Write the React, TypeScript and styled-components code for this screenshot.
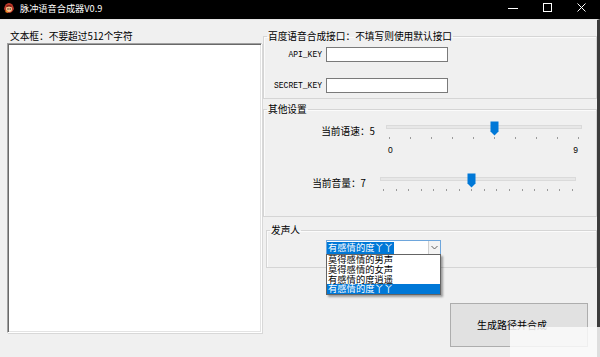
import { styled, createGlobalStyle } from "styled-components";

const GlobalStyle = createGlobalStyle`
  html, body {
    margin: 0;
    padding: 0;
    background: #f0f0f0;
  }
  * {
    box-sizing: border-box;
  }
`;

const voices = ["莫得感情的男声", "莫得感情的女声", "有感情的度逍遥", "有感情的度丫丫"];

const TitleIcon = () => (
  <svg width="12" height="12" viewBox="0 0 12 12">
    <path d="M1 7 Q2 1 6 1 Q10 1 11 7 Q9 11 6 11 Q3 11 1 7 Z" fill="#c0392b" />
    <circle cx="6" cy="7" r="3" fill="#f5c28a" />
    <path d="M3 4 Q6 2 9 4 L8 5 Q6 4 4 5 Z" fill="#7a1b12" />
    <circle cx="5" cy="7" r="0.7" fill="#222" />
    <circle cx="7.2" cy="7" r="0.7" fill="#222" />
    <path d="M2 10 L4 8 L5 11 Z" fill="#f08c1a" />
  </svg>
);

type SliderProps = {
  ticks: number;
  value: number;
  showScale?: boolean;
};

const Slider = ({ ticks, value, showScale }: SliderProps) => {
  const left = 3 + (value / (ticks - 1)) * 190 - 4.5;
  return (
    <SliderBox>
      <TrackArea>
        <Track />
        <Thumb style={{ left }}>
          <svg width="9" height="15" viewBox="0 0 9 15">
            <path d="M0.5 0.5 H8.5 V10.5 L4.5 14.5 L0.5 10.5 Z" fill="#0078d7" />
          </svg>
        </Thumb>
      </TrackArea>
      <Ticks>
        {Array.from({ length: ticks }).map((_, i) => (
          <Tick key={i} />
        ))}
      </Ticks>
      {showScale && (
        <Scale>
          <span>0</span>
          <span>{ticks - 1}</span>
        </Scale>
      )}
    </SliderBox>
  );
};

const App = () => {
  return (
    <>
      <GlobalStyle />
      <Window>
        <TitleBar>
          <IconSlot>
            <TitleIcon />
          </IconSlot>
          <Title>脉冲语音合成器V0.9</Title>
          <Controls>
            <CtrlButton>
              <svg width="10" height="10" viewBox="0 0 10 10">
                <path d="M0 5.5 H10" stroke="#fff" strokeWidth="1" />
              </svg>
            </CtrlButton>
            <CtrlButton>
              <svg width="9" height="9" viewBox="0 0 9 9">
                <rect x="0.5" y="0.5" width="8" height="8" fill="none" stroke="#fff" strokeWidth="1" />
              </svg>
            </CtrlButton>
            <CtrlButton>
              <svg width="9" height="9" viewBox="0 0 9 9">
                <path d="M0.5 0.5 L8.5 8.5 M8.5 0.5 L0.5 8.5" stroke="#fff" strokeWidth="1" />
              </svg>
            </CtrlButton>
          </Controls>
        </TitleBar>
        <Main>
          <LeftColumn>
            <Caption>文本框：不要超过512个字符</Caption>
            <TextBox />
          </LeftColumn>
          <RightColumn>
            <Group $top={10} $height={69}>
              <Legend>百度语音合成接口：不填写则使用默认接口</Legend>
              <KeyGrid>
                <KeyLabel>API_KEY</KeyLabel>
                <KeyInput />
                <KeyLabel>SECRET_KEY</KeyLabel>
                <KeyInput />
              </KeyGrid>
            </Group>
            <Group $top={4} $height={114}>
              <Legend>其他设置</Legend>
              <SliderRow $top={6} $labelWidth={111} $gap={11}>
                <SliderLabel>当前语速：5</SliderLabel>
                <Slider ticks={10} value={5} showScale />
              </SliderRow>
              <SliderRow $top={18} $labelWidth={102} $gap={14}>
                <SliderLabel>当前音量：7</SliderLabel>
                <Slider ticks={16} value={7} />
              </SliderRow>
            </Group>
            <Group $top={7} $height={44} $left={3}>
              <Legend>发声人</Legend>
              <Combo>
                <ComboValue>
                  <Selected>有感情的度丫丫</Selected>
                </ComboValue>
                <ComboArrow>
                  <svg width="7" height="5" viewBox="0 0 7 5">
                    <path d="M0.5 1 L3.5 4 L6.5 1" fill="none" stroke="#606060" strokeWidth="1" />
                  </svg>
                </ComboArrow>
                <DropList>
                  {voices.map((v, i) => (
                    <DropItem key={v} $active={i === voices.length - 1}>
                      {v}
                    </DropItem>
                  ))}
                </DropList>
              </Combo>
            </Group>
            <GenerateButton>生成路径并合成</GenerateButton>
          </RightColumn>
        </Main>
        <Watermark />
      </Window>
    </>
  );
};

const Window = styled.div`
  position: relative;
  width: 600px;
  height: 357px;
  background: #f0f0f0;
  display: flex;
  flex-direction: column;
  overflow: hidden;
  font-family: "Noto Sans CJK SC", "Noto Sans", sans-serif;
  color: #000;
`;

const TitleBar = styled.div`
  height: 19px;
  padding-bottom: 4px;
  background: #000;
  display: flex;
  align-items: center;
`;

const IconSlot = styled.div`
  width: 12px;
  height: 12px;
  margin-left: 3px;
  display: flex;
`;

const Title = styled.div`
  margin-left: 5px;
  color: #fff;
  font-size: 9.2px;
  line-height: 12px;
`;

const Controls = styled.div`
  margin-left: auto;
  margin-right: 2px;
  display: flex;
`;

const CtrlButton = styled.div`
  width: 34px;
  height: 15px;
  display: flex;
  align-items: center;
  justify-content: center;
`;

const Main = styled.div`
  flex: 1;
  display: flex;
  border-right: 3px solid #3c3c3c;
  border-top: 1px solid #e4e4e4;
`;

const LeftColumn = styled.div`
  width: 255px;
  margin-left: 7px;
  display: flex;
  flex-direction: column;
`;

const Caption = styled.div`
  margin-top: 10px;
  margin-left: 3px;
  font-size: 9.7px;
  line-height: 12px;
  white-space: nowrap;
`;

const TextBox = styled.div`
  margin-top: 1px;
  height: 290px;
  background: #fff;
  border-top: 1px solid #a0a0a0;
  border-left: 1px solid #a0a0a0;
  border-right: 1px solid #fff;
  border-bottom: 1px solid #fff;
  box-shadow: inset 1px 1px 0 #696969, inset -1px -1px 0 #e3e3e3, 1px 1px 0 #d8d8d8;
`;

const RightColumn = styled.div`
  margin-left: 1px;
  flex: 1;
  display: flex;
  flex-direction: column;
`;

const Group = styled.fieldset<{ $top: number; $height: number; $left?: number }>`
  margin: ${(p) => p.$top}px 0 0 ${(p) => p.$left ?? 0}px;
  padding: 0;
  height: ${(p) => p.$height}px;
  border: 1px solid #d5d5d5;
  box-shadow: inset 1px 1px 0 #fbfbfb;
  min-width: 0;
`;

const Legend = styled.legend`
  margin-left: 3px;
  padding: 0 1px;
  font-size: 9.7px;
  line-height: 12px;
  white-space: nowrap;
`;

const KeyGrid = styled.div`
  margin-top: 5px;
  display: grid;
  grid-template-columns: 58px 122px;
  column-gap: 4px;
  row-gap: 16px;
  align-items: center;
`;

const KeyLabel = styled.div`
  text-align: right;
  font-family: "Liberation Mono", "DejaVu Sans Mono", monospace;
  font-size: 8px;
  line-height: 10px;
  transform: scaleY(1.1);
`;

const KeyInput = styled.div`
  height: 15px;
  background: #fff;
  border: 1px solid #7a7a7a;
`;

const SliderRow = styled.div<{ $top: number; $labelWidth: number; $gap: number }>`
  margin-top: ${(p) => p.$top}px;
  display: flex;
  align-items: flex-start;
  gap: ${(p) => p.$gap}px;
  & > :first-child {
    width: ${(p) => p.$labelWidth}px;
  }
`;

const SliderLabel = styled.div`
  margin-top: 4px;
  text-align: right;
  font-size: 9.7px;
  line-height: 12px;
  white-space: nowrap;
`;

const SliderBox = styled.div`
  width: 196px;
  display: flex;
  flex-direction: column;
`;

const TrackArea = styled.div`
  position: relative;
  height: 16px;
`;

const Track = styled.div`
  margin-top: 4px;
  height: 4px;
  background: #e7e7e7;
  border: 1px solid #dadada;
`;

const Thumb = styled.div`
  position: absolute;
  top: 0;
  width: 9px;
  height: 15px;
  display: flex;
`;

const Ticks = styled.div`
  height: 3px;
  padding: 0 3px;
  display: flex;
  justify-content: space-between;
`;

const Tick = styled.div`
  width: 1px;
  height: 2px;
  background: #9a9a9a;
`;

const Scale = styled.div`
  margin-top: 5px;
  padding: 0 4px 0 2px;
  display: flex;
  justify-content: space-between;
  font-family: "Liberation Sans", Arial, sans-serif;
  font-size: 8.5px;
  line-height: 10px;
`;

const Combo = styled.div`
  position: relative;
  margin: 4px 0 0 59px;
  width: 115px;
  height: 15px;
  background: #fff;
  border: 1px solid #6ea6dc;
  display: flex;
`;

const ComboValue = styled.div`
  flex: 1;
  padding: 1px 0 0 0;
  display: flex;
`;

const Selected = styled.span`
  background: #0078d7;
  color: #fff;
  font-size: 9.3px;
  line-height: 11px;
  padding: 0 1px;
  white-space: nowrap;
`;

const ComboArrow = styled.div`
  width: 12px;
  border-left: 1px solid #d0d0d0;
  background: #f4f4f4;
  display: flex;
  align-items: center;
  justify-content: center;
`;

const DropList = styled.div`
  position: absolute;
  top: 13px;
  left: -1px;
  width: 115px;
  height: 41px;
  background: #fff;
  border: 1px solid #646464;
  box-shadow: 2px 2px 2px rgba(0, 0, 0, 0.35);
  display: flex;
  flex-direction: column;
  overflow: hidden;
  z-index: 2;
`;

const DropItem = styled.div<{ $active: boolean }>`
  height: 9.75px;
  padding-left: 1px;
  font-size: 9.3px;
  line-height: 9.75px;
  white-space: nowrap;
  overflow: hidden;
  background: ${(p) => (p.$active ? "#0078d7" : "transparent")};
  color: ${(p) => (p.$active ? "#fff" : "#000")};
`;

const GenerateButton = styled.div`
  margin: 35px 0 0 187px;
  width: 138px;
  height: 44px;
  padding-left: 26px;
  background: #e1e1e1;
  border: 1px solid #adadad;
  display: flex;
  align-items: center;
  font-size: 10px;
  line-height: 12px;
  white-space: nowrap;
`;

const Watermark = styled.div`
  position: absolute;
  left: 510px;
  top: 327px;
  width: 90px;
  height: 30px;
  background: rgba(250, 250, 250, 0.85);
`;

export default App;
